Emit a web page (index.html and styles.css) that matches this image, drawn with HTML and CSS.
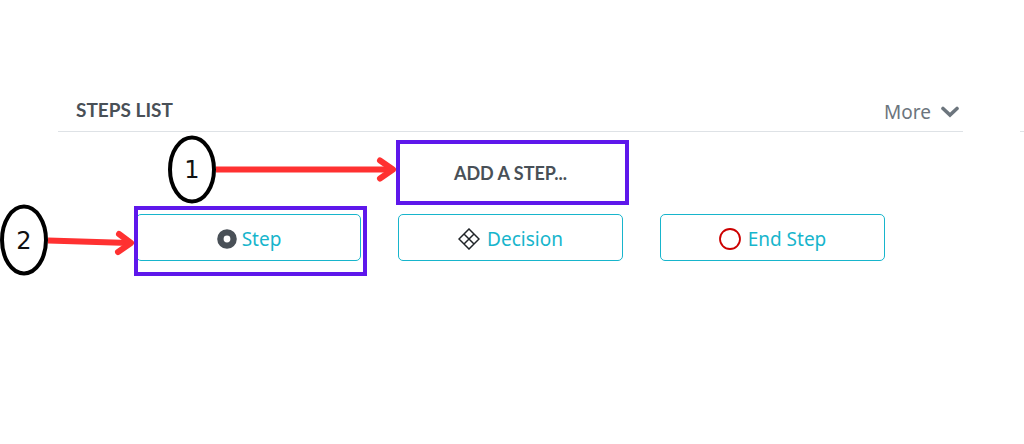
FILE: index.html
```
<!DOCTYPE html>
<html lang="en">
<head>
    <meta charset="utf-8">
    <title>Steps List</title>
    <link rel="stylesheet" href="styles.css">
</head>
<body>
<div class="page">
    <main class="panel">
        <header class="panel-header">
            <h1 class="panel-title">STEPS LIST</h1>
            <button type="button" class="more">
                More
                <svg class="chevron" viewBox="0 0 18 12" aria-hidden="true">
                    <path d="M2 2.5 L9 9 L16 2.5" fill="none" stroke="#6c757d" stroke-width="3.6" stroke-linecap="round"/>
                </svg>
            </button>
        </header>
        <div class="steps">
            <div class="heading-cell">
                <h2 class="add-title">ADD A STEP...</h2>
                <div class="highlight"></div>
                <svg class="callout callout-one" viewBox="0 0 230 70">
                    <ellipse cx="24" cy="34.5" rx="22" ry="32" fill="#fff" stroke="#000" stroke-width="4"/>
                    <text class="callout-number" x="24" y="43">1</text>
                    <path d="M48 34.5 H222" stroke="#ff3131" stroke-width="6"/>
                    <path d="M212 25.5 L225 34.5 L212 43.5" fill="none" stroke="#ff3131" stroke-width="6" stroke-linecap="round" stroke-linejoin="round"/>
                </svg>
            </div>
            <div class="cell cell-step">
                <button type="button" class="step-btn">
                    <svg class="icon" viewBox="0 0 22 22" aria-hidden="true">
                        <circle cx="11" cy="11" r="6.6" fill="none" stroke="#495057" stroke-width="6.4"/>
                    </svg>
                    Step
                </button>
                <div class="highlight highlight-step"></div>
                <svg class="callout callout-two" viewBox="0 0 136 72">
                    <ellipse cx="24" cy="36" rx="22" ry="33.5" fill="#fff" stroke="#000" stroke-width="4"/>
                    <text class="callout-number" x="24" y="45">2</text>
                    <path d="M48 36.5 L129 39" stroke="#ff3131" stroke-width="6"/>
                    <path d="M119 30 L131 39 L118 48" fill="none" stroke="#ff3131" stroke-width="6" stroke-linecap="round" stroke-linejoin="round"/>
                </svg>
            </div>
            <div class="cell">
                <button type="button" class="step-btn">
                    <svg class="icon" viewBox="0 0 22 22" aria-hidden="true">
                        <path d="M11 1 L21 11 L11 21 L1 11 Z M6 6 L16 16 M16 6 L6 16" fill="none" stroke="#212529" stroke-width="1.5"/>
                    </svg>
                    Decision
                </button>
            </div>
            <div class="cell">
                <button type="button" class="step-btn">
                    <svg class="icon" viewBox="0 0 22 22" aria-hidden="true">
                        <circle cx="11" cy="11" r="10" fill="none" stroke="#cc0000" stroke-width="1.8"/>
                    </svg>
                    End Step
                </button>
            </div>
        </div>
    </main>
    <aside class="next-panel"></aside>
</div>
</body>
</html>
```
FILE: styles.css
```
body {
    margin: 0;
    background-color: #fff;
    color: #495057;
    font-family: "Noto Sans", "Open Sans", sans-serif;
    font-size: 19px;
}

.page {
    display: grid;
    grid-template-columns: 1fr 4px;
    column-gap: 57px;
    padding: 92px 0 80px 58px;
}

.panel-header, .next-panel {
    box-sizing: border-box;
    height: 40px;
    border-bottom: 1px solid #dee2e6;
}

.panel-header {
    display: flex;
    justify-content: space-between;
    align-items: center;
    padding: 0 4px 0 18px;
}

.panel-title, .add-title {
    margin: 0;
    font-family: Lato, sans-serif;
    font-weight: bold;
    line-height: 24px;
}

.panel-title {
    padding-bottom: 4px;
    font-size: 19px;
}

.add-title {
    font-size: 18px;
}

.more {
    display: flex;
    align-items: center;
    gap: 10px;
    padding: 0;
    border: 0;
    background: none;
    color: #6c757d;
    font: inherit;
}

.chevron {
    width: 18px;
    height: 12px;
}

.steps {
    display: grid;
    grid-template-columns: repeat(3, 1fr);
    column-gap: 37px;
    padding: 8px 78px 0;
}

.heading-cell {
    grid-column: 2;
    position: relative;
    display: flex;
    justify-content: center;
    align-items: center;
    height: 65px;
    margin-bottom: 9px;
}

.cell {
    position: relative;
}

.cell-step {
    grid-column: 1;
}

.step-btn {
    display: flex;
    justify-content: center;
    align-items: center;
    gap: 7px;
    width: 100%;
    height: 47px;
    border: 1px solid #17b5cc;
    border-radius: 5px;
    padding: 2px 0 0;
    background-color: #fff;
    color: #17b5cc;
    font: inherit;
}

.icon {
    width: 22px;
    height: 22px;
}

.cell-step .step-btn {
    gap: 4px;
}

/* tutorial annotations */
.highlight {
    position: absolute;
    top: 0;
    right: -6px;
    bottom: 0;
    left: -2px;
    border: 4px solid #5e17eb;
    pointer-events: none;
}

.highlight-step {
    top: -8px;
    bottom: -15px;
}

.callout {
    position: absolute;
    right: 100%;
    pointer-events: none;
}

.callout-one {
    top: -5px;
    width: 230px;
    height: 70px;
}

.callout-two {
    top: -10px;
    width: 136px;
    height: 72px;
}

.callout-number {
    font-family: "DejaVu Sans", sans-serif;
    font-size: 24px;
    text-anchor: middle;
    fill: #111;
}
```
